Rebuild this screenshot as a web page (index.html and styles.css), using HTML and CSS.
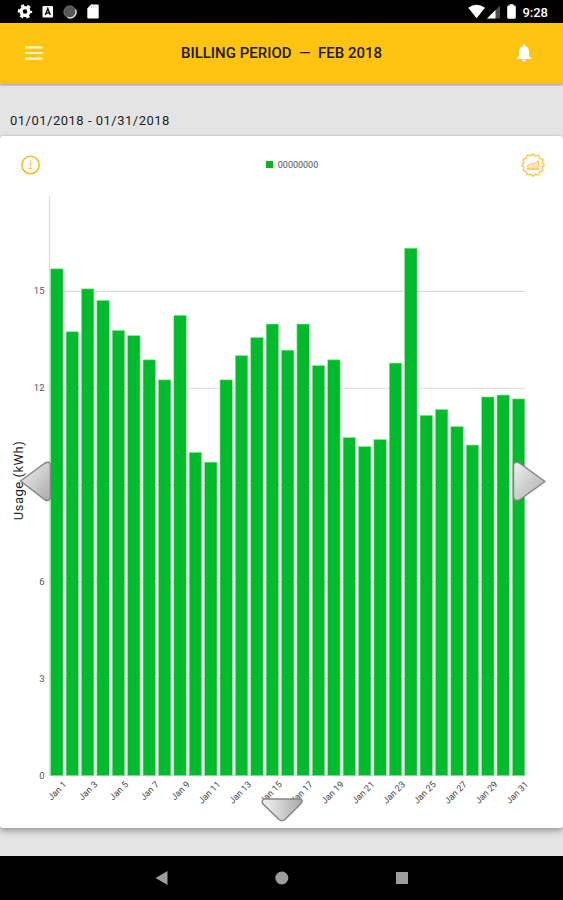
FILE: index.html
```html
<!DOCTYPE html>
<html lang="en">
<head>
<meta charset="utf-8">
<title>Billing Period</title>
<link rel="stylesheet" href="styles.css">
</head>
<body>
<header class="status">
  <svg class="status-left" width="90" height="23" viewBox="0 0 90 23">
    <circle cx="13" cy="11.5" r="3.9" fill="none" stroke="#fff" stroke-width="3.2"/>
    <circle cx="13" cy="11.5" r="6.1" fill="none" stroke="#fff" stroke-width="2.2" stroke-dasharray="3.2 3.19" stroke-dashoffset="1.6"/>
    <rect x="30.5" y="6" width="10.5" height="11.5" rx="1" fill="#fff"/>
    <path d="M33.3 15l2.5-6.5 2.5 6.5M34.2 13h3.2" fill="none" stroke="#111" stroke-width="1.4"/>
    <circle cx="57.8" cy="11.8" r="5.9" fill="#575757" stroke="#777" stroke-width="1"/>
    <path d="M63.5 9.5a6 6 0 0 1-8 7.9" fill="none" stroke="#ddd" stroke-width="1.4"/>
    <path d="M79 4.500h6.500q1.200 0 1.200 1.200v11.500q0 1.200-1.200 1.200h-9q-1.200 0-1.200-1.200V8.500z" fill="#fff"/>
    <path d="M79.500 6v2M81.700 6v2M83.900 6v2" stroke="#bbb" stroke-width=".7"/>
  </svg>
  <div class="status-right">
    <svg width="51" height="23" viewBox="0 0 51 23">
      <path d="M.2 7.800Q8.500 1.500 17 7.800L8.600 18.300z" fill="#fff"/>
      <path d="M32 5.500V18.500H19z" fill="#4b4b4b"/>
      <path d="M27.500 10V18.500H19z" fill="#fff"/>
      <path d="M41.500 4.200h4v1.400h1q1.300 0 1.300 1.300v10.300q0 1.500-1.300 1.500h-6q-1.300 0-1.300-1.500V6.900q0-1.300 1.300-1.300h1z" fill="#fff"/>
    </svg>
    <span class="clock">9:28</span>
  </div>
</header>
<nav class="appbar">
  <svg width="20" height="16" viewBox="0 0 20 16"><path d="M1 2.300h17.500M1 8h17.500M1 13.700h17.500" stroke="#fff6d5" stroke-width="2.200"/></svg>
  <h1 class="title">BILLING PERIOD&nbsp; — &nbsp;FEB 2018</h1>
  <svg width="16" height="18" viewBox="0 0 16 18"><path d="M8 17.500a2 2 0 0 0 2-1.700H6a2 2 0 0 0 2 1.700zM13 12V7.500C13 4.700 11.500 2.800 9.300 2.200V1.600a1.300 1.300 0 0 0-2.600 0v.6C4.500 2.800 3 4.700 3 7.500V12L.8 14v1h14.400v-1z" fill="#fff"/></svg>
</nav>
<p class="range">01/01/2018 - 01/31/2018</p>
<main class="card">
  <div class="card-head">
    <svg width="22" height="22" viewBox="0 0 22 22"><circle cx="11.500" cy="11" r="8.700" fill="none" stroke="#fbb928" stroke-width="1.500"/><path d="M11.300 6.200v1.700M9.800 9.700h1.700v5M9.500 14.700h4" fill="none" stroke="#fbc979" stroke-width="1.200"/></svg>
    <div class="legend"><i class="swatch"></i><span>00000000</span></div>
    <svg width="26" height="26" viewBox="0 0 26 26">
      <path id="badge" fill="none" stroke="#fcc24a" stroke-width="1.400"/>
      <path d="M6.800 17h12.400" fill="none" stroke="#fcc04a" stroke-width="1.600"/>
      <path d="M7.500 15v-1.500l4-2 2 .300L18.500 8.800V15z" fill="#fee3aa" stroke="#fdca68" stroke-width="1"/>
      <path d="M10.300 15v-2M13 15v-2.500M15.700 15v-3.500" stroke="#fff" stroke-width=".8"/>
    </svg>
  </div>
  <svg class="chart" width="563" height="643" viewBox="0 185 563 643">
    <defs>
      <linearGradient id="metal" x1="0" y1="0" x2="1" y2="1"><stop offset="0" stop-color="#f2f2f2"/><stop offset="1" stop-color="#aaa"/></linearGradient>
      <linearGradient id="metalDown" x1="0" y1="0" x2="1" y2="0"><stop offset="0" stop-color="#f4f4f4"/><stop offset="1" stop-color="#a8a8a8"/></linearGradient>
    </defs>
    <g id="grid"></g>
    <g id="bars"></g>
    <g id="labels"></g>
    <text class="axis-title" transform="translate(23 480.500) rotate(-90)">Usage (kWh)</text>
    <g class="arrows">
      <path d="M20.500 481L45 463q5.500-2.500 5.500 3v30q0 6-5.500 4z" fill="url(#metal)"/>
      <path d="M545 481.500L519.500 463q-6-2.500-6 3v30q0 6 6 4z" fill="url(#metal)"/>
      <path d="M264 799h37q2.500 2-.500 5l-15.500 15.500q-3 2.500-6 0L263 804q-2-3 1-5z" fill="url(#metalDown)"/>
    </g>
  </svg>
</main>
<footer class="navbar">
  <svg width="563" height="44" viewBox="0 0 563 44" fill="#9c9c9c">
    <path d="M155.500 22l12-7v14z"/><circle cx="281.800" cy="22" r="6.500"/><rect x="396" y="16" width="12" height="12"/>
  </svg>
</footer>
<script src="script.js"></script>
</body>
</html>
```
FILE: styles.css
```css
* { box-sizing: border-box; }
body {
  margin: 0;
  width: 563px;
  height: 900px;
  display: flex;
  flex-direction: column;
  overflow: hidden;
  background: #e4e4e4;
  font-family: Roboto, sans-serif;
}
svg { display: block; flex: none; }
.status {
  height: 23px;
  padding: 0 15px 0 12px;
  display: flex;
  justify-content: space-between;
  background: #000;
}
.status-right { display: flex; gap: 3px; }
.clock { color: #fff; font-size: 13px; font-weight: 500; line-height: 25px; }
.appbar {
  height: 61px;
  flex: none;
  padding: 0 31px 1px 24px;
  display: flex;
  align-items: center;
  justify-content: space-between;
  background: #ffc412;
  box-shadow: 0 1px 2px #999;
}
.title { margin: 0; padding-left: 3px; font-size: 15px; font-weight: 500; color: #201800; white-space: pre; }
.range {
  height: 52px;
  flex: none;
  margin: 0;
  padding: 29px 10px 0;
  font-size: 13px;
  line-height: 16px;
  letter-spacing: .5px;
  color: #222;
}
.card {
  height: 692px;
  flex: none;
  background: #fff;
  border-radius: 3px;
  box-shadow: 0 3px 6px #999, 0 0 2px #bbb;
}
.card-head {
  height: 49px;
  padding: 8px 17px 0 19px;
  display: flex;
  align-items: center;
  justify-content: space-between;
}
.legend { display: flex; align-items: center; gap: 5px; padding-left: 23px; font-size: 9px; color: #555; }
.swatch { width: 7px; height: 7px; background: #06b51c; }
.bar { fill: #00bc2c; stroke: #8fe08f; stroke-width: .6; }
.grid-line { stroke: #d9d9d9; stroke-width: 1.2; }
.axis-line { stroke: #dedede; stroke-width: 1.2; }
.tick { font-size: 9.5px; fill: #555; text-anchor: end; }
.day { font-size: 9px; fill: #444; text-anchor: end; }
.axis-title { font-size: 13px; letter-spacing: .5px; fill: #222; text-anchor: middle; }
.arrows { stroke: #858585; stroke-width: 1.5; stroke-linejoin: round; }
.navbar { height: 44px; margin-top: auto; background: #000; position: relative; }
```
FILE: script.js
```js
const NS = "http://www.w3.org/2000/svg";
const base = 775.5, unit = 32.27, left = 50.7, pitch = 15.39;
const usage = [15.7, 13.75, 15.08, 14.72, 13.79, 13.63, 12.88, 12.26, 14.26, 10.01, 9.71, 12.26, 13.01, 13.57, 13.99, 13.18, 13.99, 12.7, 12.88, 10.47, 10.19, 10.41, 12.78, 16.34, 11.16, 11.34, 10.81, 10.24, 11.73, 11.79, 11.67];

function add(parent, name, attrs, text) {
  const el = document.createElementNS(NS, name);
  for (const key in attrs) el.setAttribute(key, attrs[key]);
  if (text !== undefined) el.textContent = text;
  document.getElementById(parent).appendChild(el);
}

add("grid", "line", { class: "axis-line", x1: 49.5, x2: 49.5, y1: 196, y2: base });
for (let v = 0; v <= 15; v += 3) {
  const y = base - v * unit;
  add("grid", "line", { class: "grid-line", x1: 49, x2: 525, y1: y, y2: y });
  if (v !== 9) add("labels", "text", { class: "tick", x: 44.5, y: y + 3 }, v);
}
usage.forEach((v, i) => {
  const x = left + i * pitch;
  add("bars", "rect", { class: "bar", x, y: base - v * unit, width: 12.4, height: v * unit });
  if (i % 2 === 0) {
    add("labels", "text", { class: "day", transform: `translate(${x + 16.5} 785) rotate(-45)` }, `Jan ${i + 1}`);
  }
});

let d = "";
for (let a = 0; a <= 360; a += 3) {
  const t = a * Math.PI / 180, r = 10.3 + 0.8 * Math.cos(12 * t);
  d += (a ? "L" : "M") + (13 + r * Math.cos(t)).toFixed(2) + " " + (13 + r * Math.sin(t)).toFixed(2);
}
document.getElementById("badge").setAttribute("d", d + "z");
```
